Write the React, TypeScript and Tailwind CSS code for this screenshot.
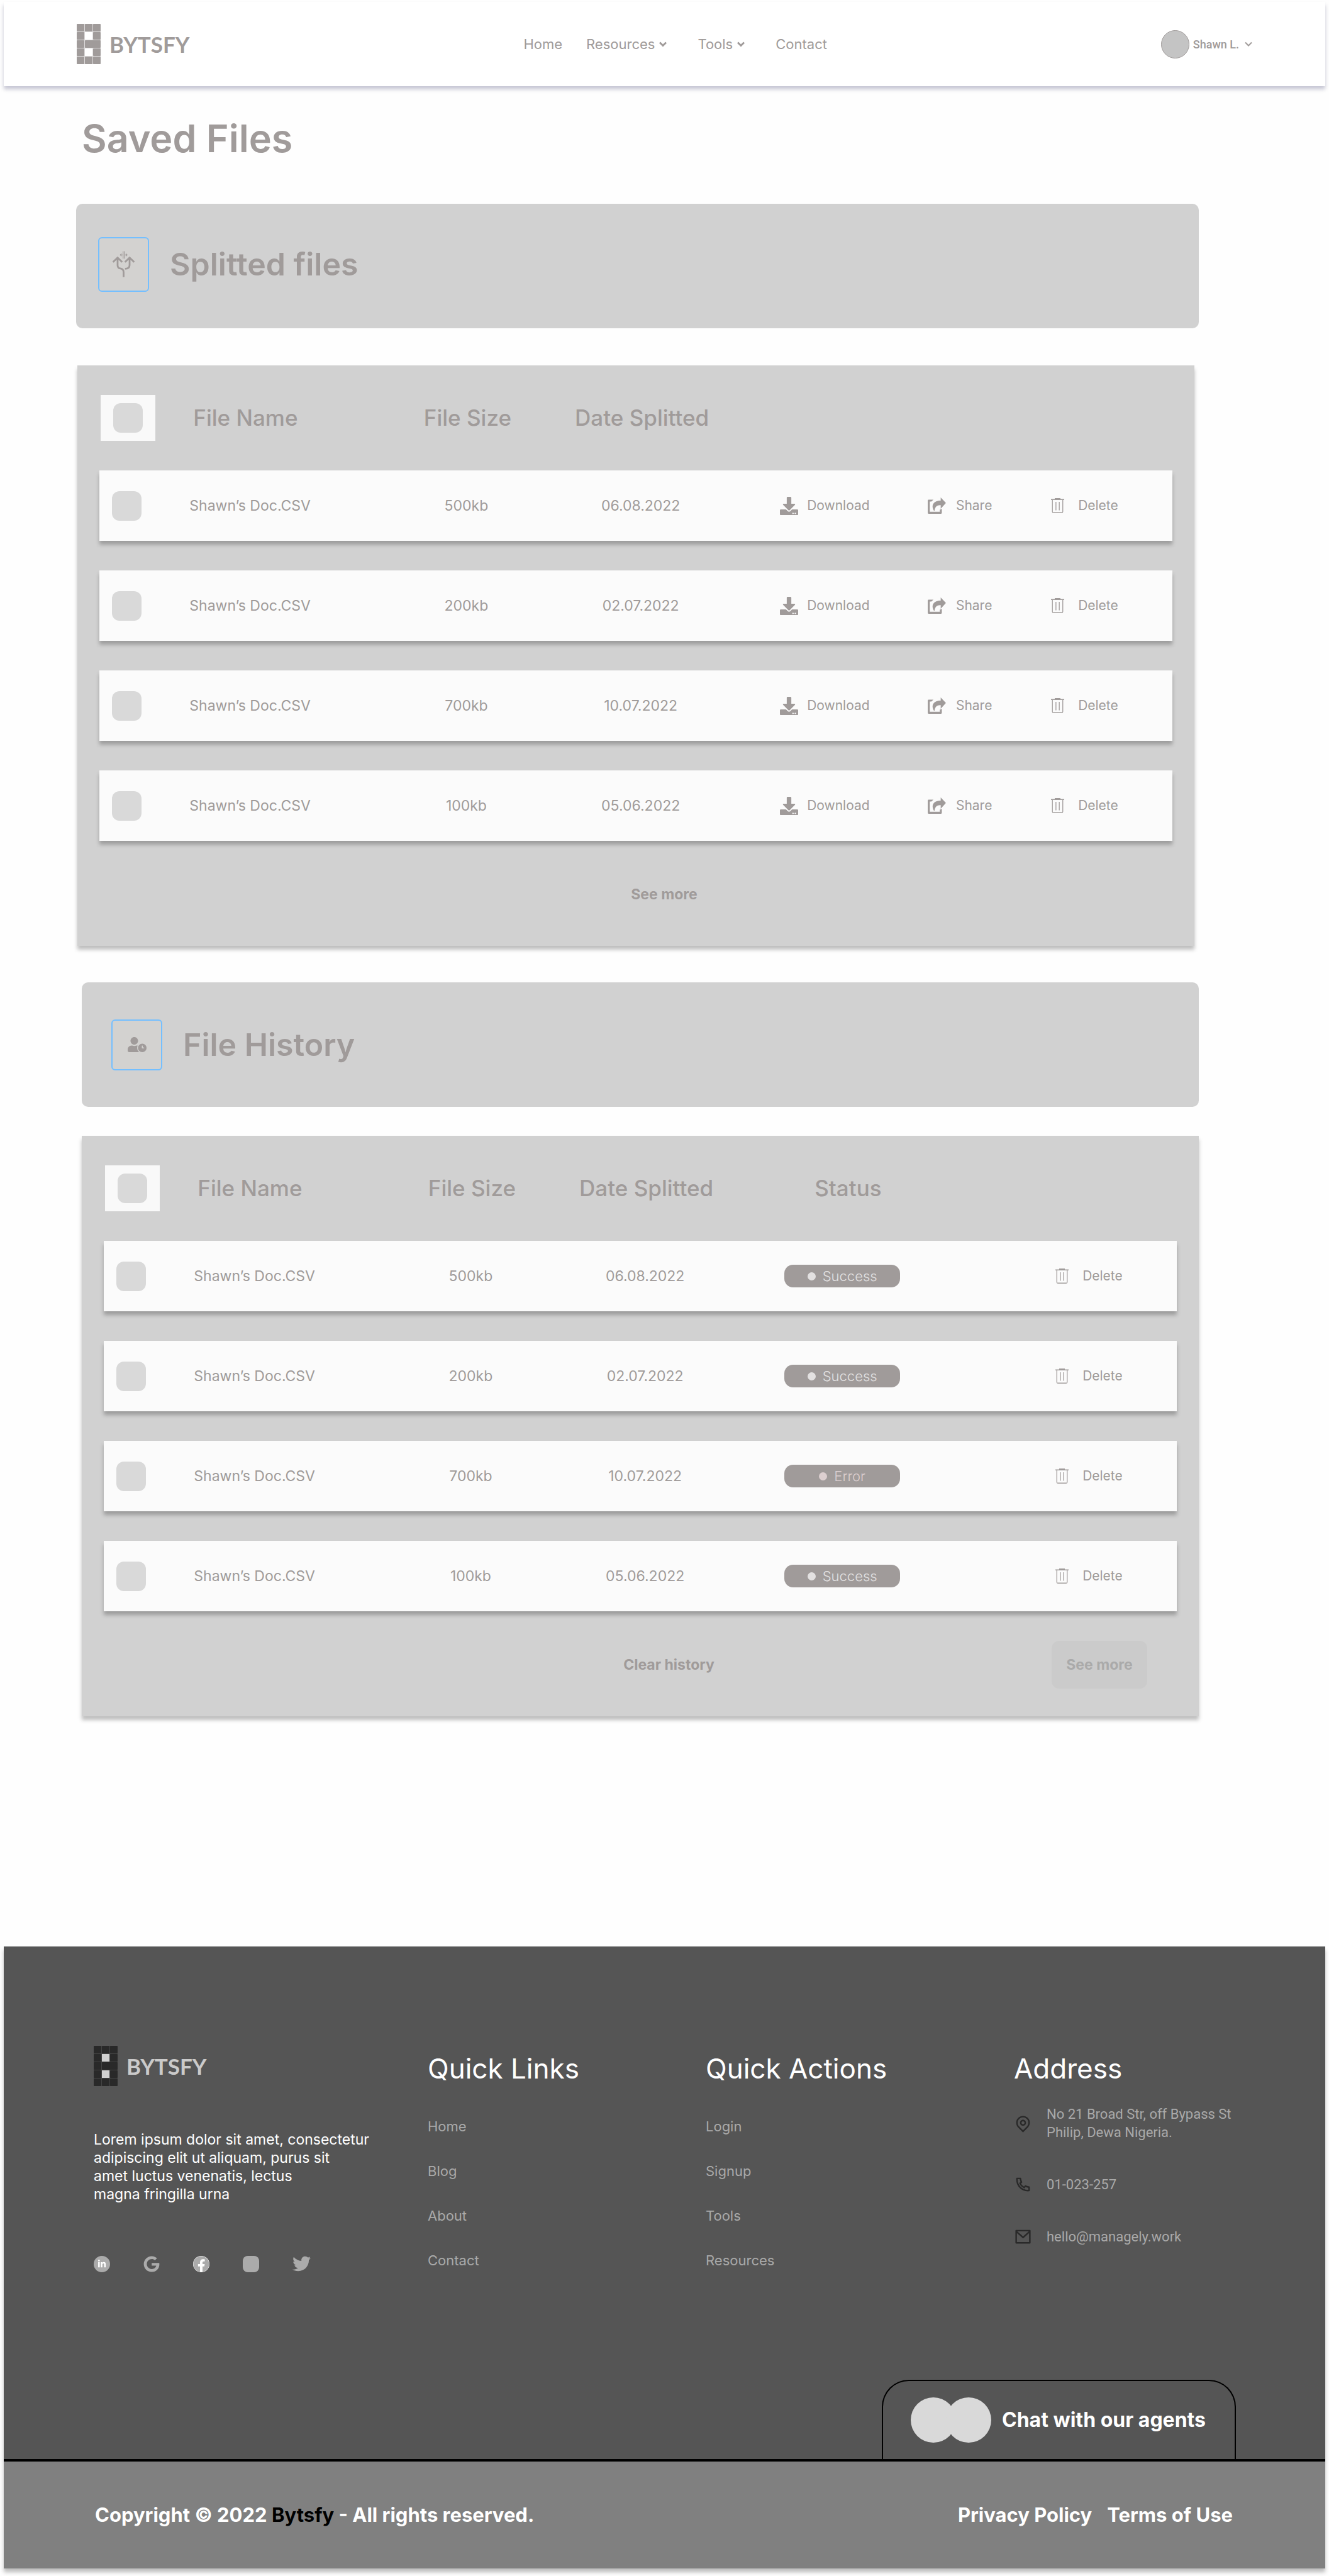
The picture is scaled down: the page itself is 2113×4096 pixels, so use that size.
import React from "react";
import { FaDownload, FaFacebook, FaGoogle, FaLinkedinIn, FaTwitter, FaUserClock } from "react-icons/fa";
import { RiMailLine, RiMapPinLine, RiPhoneLine } from "react-icons/ri";

type FileRow = {
  name: string;
  size: string;
  date: string;
  status: "Success" | "Error";
};

const files: FileRow[] = [
  { name: "Shawn’s Doc.CSV", size: "500kb", date: "06.08.2022", status: "Success" },
  { name: "Shawn’s Doc.CSV", size: "200kb", date: "02.07.2022", status: "Success" },
  { name: "Shawn’s Doc.CSV", size: "700kb", date: "10.07.2022", status: "Error" },
  { name: "Shawn’s Doc.CSV", size: "100kb", date: "05.06.2022", status: "Success" },
];

function LogoMark({ cell, hole, gap }: { cell: string; hole: string; gap: string }) {
  const cells: [number, number, number][] = [
    [0, 0, 12], [13, 0, 12], [26, 0, 12],
    [0, 13, 12], [26, 13, 12],
    [0, 26, 12], [13, 26, 25],
    [0, 39, 12], [26, 39, 12],
    [0, 52, 12], [13, 52, 12], [26, 52, 12],
  ];
  return (
    <svg viewBox="0 0 38 64" className="h-16 w-[38px] shrink-0" aria-hidden="true">
      <rect width="38" height="64" rx="2" fill={gap} />
      {cells.map(([x, y, w]) => (
        <rect key={`${x}-${y}`} x={x} y={y} width={w} height="12" rx="1" fill={cell} />
      ))}
      <rect x="13" y="13" width="12" height="12" fill={hole} />
      <rect x="13" y="39" width="12" height="12" fill={hole} />
    </svg>
  );
}

function Chevron({ thin = false }: { thin?: boolean }) {
  return (
    <svg viewBox="0 0 14 14" className="size-3.5" fill="none" stroke="currentColor" strokeWidth={thin ? 2 : 3} aria-hidden="true">
      <path d="M2 4.5l5 5 5-5" />
    </svg>
  );
}

function ShareIcon() {
  return (
    <svg viewBox="0 0 40 36" className="h-[26px] w-[29px]" fill="currentColor" aria-hidden="true">
      <path d="M12.500 5 8 9H4.500v22.500h22V27l4.500-2v9a2 2 0 0 1-2 2H2a2 2 0 0 1-2-2V7a2 2 0 0 1 2-2z" />
      <path d="M28.500 0 40 12 28.500 25v-8c-8.500-.5-12.500 3.500-13.500 12h-1.500C6.500 17 13 7 28.500 7z" />
    </svg>
  );
}

function TrashIcon() {
  return (
    <svg viewBox="0 0 28 32" className="h-6 w-[21px]" fill="none" stroke="currentColor" strokeWidth="1.7" aria-hidden="true">
      <path d="M0 3h28M8 1h12M3 3v26a2 2 0 0 0 2 2h18a2 2 0 0 0 2-2V3M10.500 8v18M17.500 8v18" />
    </svg>
  );
}

function SplitIcon() {
  return (
    <svg viewBox="40 36 50 60" className="h-11 w-[37px]" fill="none" stroke="currentColor" aria-hidden="true">
      <path strokeWidth="3.800" d="M65 94V84c0-5-2-8-7-8.500-4-.4-6-3-6-7V53M42 61.500l10-9.500 10 9.500M68 76c7 0 10-2.500 10-8V53M68 61.500 78 52l10 9.500" />
      <path strokeWidth="1.500" d="M64 38v16M66.500 38v16M62.500 46H58M60.500 43.300 57.800 46l2.700 2.700M68 46h4.500M70 43.300l2.700 2.700-2.700 2.700" />
    </svg>
  );
}

function Checkbox({ label }: { label: string }) {
  return (
    <input
      type="checkbox"
      aria-label={label}
      className="block size-[47px] appearance-none rounded-xl bg-[#d9d9d9] checked:bg-[#a09b9a]"
    />
  );
}

function Banner({ title, icon, className }: { title: string; icon: React.ReactNode; className: string }) {
  return (
    <div className={`flex h-[198px] items-center gap-[33px] rounded-[10px] bg-[#d1d1d1] ${className}`}>
      {icon}
      <h2 className="text-[50px] font-semibold">{title}</h2>
    </div>
  );
}

function Action({ icon, label, gap }: { icon: React.ReactNode; label: string; gap: string }) {
  return (
    <button type="button" className={`flex items-center text-[21px] ${gap}`}>
      {icon}
      {label}
    </button>
  );
}

function StatusPill({ status }: { status: FileRow["status"] }) {
  const tone = status === "Error" ? "text-[#dccfd0]" : "text-[#e3e1e1]";
  return (
    <div className={`flex h-9 w-[184px] items-center justify-center gap-[11px] rounded-[14px] bg-[#a09b9a] text-[22px] font-light ${tone}`}>
      <span className="size-[13px] rounded-full bg-current" />
      {status}
    </div>
  );
}

function FileTable({ history = false }: { history?: boolean }) {
  return (
    <table className="w-full table-fixed border-separate border-spacing-x-0 border-spacing-y-[47px] text-[23px]">
      <colgroup>
        <col className="w-[8.4%]" />
        <col className="w-[18.9%]" />
        <col className="w-[13.8%]" />
        <col className="w-[18.7%]" />
        <col className="w-[16.4%]" />
        <col className="w-[11.5%]" />
        <col className="w-[12.3%]" />
      </colgroup>
      <thead>
        <tr className="h-[73px] text-[35px]">
          <th className="p-0 font-medium">
            <div className="ml-0.5 flex h-[73px] w-[87px] items-center justify-center bg-[#f9f9f9]">
              <Checkbox label="Select all files" />
            </div>
          </th>
          <th className="p-0 pl-1.5 text-left font-medium">File Name</th>
          <th className="p-0 pl-1 font-medium">File Size</th>
          <th className="whitespace-nowrap p-0 pl-1 font-medium">Date Splitted</th>
          <th className="p-0 pl-[110px] text-left font-medium">{history ? "Status" : null}</th>
          <th className="p-0" />
          <th className="p-0" />
        </tr>
      </thead>
      <tbody>
        {files.map((f) => (
          <tr key={f.date} className="h-28 bg-[#fbfbfb] shadow-[0_6px_6px_rgba(0,0,0,0.25)]">
            <td className="p-0 pl-5">
              <Checkbox label={`Select ${f.name} ${f.date}`} />
            </td>
            <td className="p-0">{f.name}</td>
            <td className="p-0 text-center">{f.size}</td>
            <td className="p-0 text-center">{f.date}</td>
            <td className="p-0 pl-[62px]">
              {history ? <StatusPill status={f.status} /> : <Action icon={<FaDownload className="size-[29px]" />} label="Download" gap="gap-3.5" />}
            </td>
            <td className="p-0 pl-[17px]">
              {history ? null : <Action icon={<ShareIcon />} label="Share" gap="gap-4" />}
            </td>
            <td className="p-0 pl-[17px]">
              <Action icon={<TrashIcon />} label="Delete" gap="gap-[22px]" />
            </td>
          </tr>
        ))}
      </tbody>
    </table>
  );
}

const linkGroups = [
  { title: "Quick Links", links: ["Home", "Blog", "About", "Contact"] },
  { title: "Quick Actions", links: ["Login", "Signup", "Tools", "Resources"] },
];

export default function App() {
  return (
    <div className="min-h-screen bg-[#fefefe] pt-[3px] pb-[17px] font-['Inter',sans-serif] text-[#a09b9a]">
      <header className="mx-1.5 flex h-[134px] items-center justify-between bg-white pr-[115px] pl-[116px] shadow-[0_5px_6px_rgba(0,5,65,0.22)]">
        <a href="#home" className="flex items-center gap-3.5 font-['Lato',sans-serif] text-[35px] font-bold">
          <LogoMark cell="#a09b9a" hole="#ffffff" gap="#dddbdb" />
          BYTSFY
        </a>
        <nav className="flex items-center text-[22px]">
          <a href="#home">Home</a>
          <button type="button" className="ml-[38px] flex items-center gap-1.5">
            Resources <Chevron />
          </button>
          <button type="button" className="ml-12 flex items-center gap-1.5">
            Tools <Chevron />
          </button>
          <a href="#contact" className="ml-12">Contact</a>
        </nav>
        <button type="button" className="flex items-center font-['Roboto',sans-serif] text-[18px] font-medium">
          <span className="mr-1.5 size-[45px] rounded-full border border-[#a09b9a] bg-[#c4c4c4]" />
          <span className="mr-2">Shawn L.</span>
          <Chevron thin />
        </button>
      </header>

      <main className="mr-[207px] ml-[121px]">
        <h1 className="mt-[47px] ml-[9px] text-[61px] leading-[72px] font-semibold">Saved Files</h1>

        <Banner
          title="Splitted files"
          className="mt-[68px] pb-1.5 pl-[35px]"
          icon={
            <span className="flex h-[87px] w-[81px] items-center justify-center rounded-md border-2 border-[#74bfff] bg-[#d3d2d0]">
              <SplitIcon />
            </span>
          }
        />

        <section className="mt-[59px] mr-[7px] ml-0.5 bg-[#d1d1d1] px-[35px] pb-[62px] shadow-[0_6px_6px_rgba(0,0,0,0.25)]">
          <FileTable />
          <div className="flex h-[58px] items-center justify-center pt-[18px] pl-[90px]">
            <button type="button" className="text-[23px] font-bold">See more</button>
          </div>
        </section>

        <Banner
          title="File History"
          className="mt-[58px] ml-[9px] pl-[47px]"
          icon={
            <span className="flex size-[81px] items-center justify-center rounded-md border-2 border-[#74bfff] bg-[#d3d2d0]">
              <FaUserClock className="h-6 w-[30px]" />
            </span>
          }
        />

        <section className="mt-[46px] ml-[9px] bg-[#d1d1d1] px-[35px] pb-11 shadow-[0_6px_6px_rgba(0,0,0,0.25)]">
          <FileTable history />
          <div className="grid grid-cols-[1fr_auto_1fr] items-center pr-[47px] pl-[138px]">
            <button type="button" className="col-start-2 text-[23px] font-bold">Clear history</button>
            <button type="button" className="h-[76px] w-[152px] justify-self-end rounded-xl bg-[#cbcbcb] text-[23px] font-bold text-[#aaaaaa]">
              See more
            </button>
          </div>
        </section>
      </main>

      <footer className="mx-1.5 mt-[366px] bg-[#555555] shadow-[0_6px_6px_rgba(0,0,0,0.25)]">
        <div className="grid grid-cols-[531fr_442fr_490fr_353fr] pt-[158px] pr-[142px] pl-[143px] text-[22px] leading-[29px] text-[#a9a9a9]">
          <div>
            <a href="#home" className="flex items-center gap-3.5 font-['Lato',sans-serif] text-[35px] font-bold text-[#cacaca]">
              <LogoMark cell="#292929" hole="#d0d0d0" gap="#444444" />
              BYTSFY
            </a>
            <p className="mt-[71px] text-[23px] text-white">
              Lorem ipsum dolor sit amet, consectetur
              <br />
              adipiscing elit ut aliquam, purus sit
              <br />
              amet luctus venenatis, lectus
              <br />
              magna fringilla urna
            </p>
            <div className="mt-[81px] flex items-center gap-[53px] text-[#ababab]">
              <a href="#linkedin" aria-label="LinkedIn" className="flex size-[26px] items-center justify-center rounded-full bg-[#ababab] text-white">
                <FaLinkedinIn className="size-3.5" />
              </a>
              <a href="#google" aria-label="Google"><FaGoogle className="size-[26px]" /></a>
              <a href="#facebook" aria-label="Facebook" className="rounded-full bg-white">
                <FaFacebook className="size-[26px]" />
              </a>
              <a href="#instagram" aria-label="Instagram" className="size-[26px] rounded-lg bg-[#ababab]" />
              <a href="#twitter" aria-label="Twitter"><FaTwitter className="size-[29px]" /></a>
            </div>
          </div>

          {linkGroups.map((g) => (
            <div key={g.title}>
              <h3 className="mt-1 text-[44px] leading-[64px] text-white">{g.title}</h3>
              <ul className="mt-[46px] flex flex-col gap-[42px]">
                {g.links.map((l) => (
                  <li key={l}>
                    <a href={`#${l.toLowerCase()}`}>{l}</a>
                  </li>
                ))}
              </ul>
            </div>
          ))}

          <div>
            <h3 className="mt-1 text-[44px] leading-[64px] text-white">Address</h3>
            <address className="mt-[26px] flex flex-col gap-[54px] font-['Roboto',sans-serif] not-italic">
              <div className="flex items-center gap-[23px] whitespace-nowrap">
                <RiMapPinLine className="size-[29px] text-[#292929]" />
                <p>
                  No 21 Broad Str, off Bypass St
                  <br />
                  Philip, Dewa Nigeria.
                </p>
              </div>
              <a href="tel:01023257" className="flex items-center gap-[23px]">
                <RiPhoneLine className="size-[29px] text-[#292929]" />
                01-023-257
              </a>
              <a href="mailto:hello@managely.work" className="flex items-center gap-[23px]">
                <RiMailLine className="size-[29px] text-[#292929]" />
                hello@managely.work
              </a>
            </address>
          </div>
        </div>

        <div className="mt-[170px] flex justify-end pr-[142px]">
          <button type="button" className="flex h-[126px] items-center rounded-t-[43px] border-2 border-b-0 border-black pr-[46px] pl-11 text-[32px] font-bold text-white">
            <span className="size-[72px] rounded-full bg-[#d9d9d9]" />
            <span className="-ml-4 mr-[17px] size-[72px] rounded-full bg-[#d9d9d9]" />
            Chat with our agents
          </button>
        </div>

        <div className="flex h-[174px] items-center justify-between border-t-4 border-black bg-[#808080] pr-[147px] pl-[145px] text-[31px] font-bold text-white">
          <p>
            Copyright © 2022 <span className="text-black">Bytsfy</span> - All rights reserved.
          </p>
          <div className="flex gap-6">
            <a href="#privacy">Privacy Policy</a>
            <a href="#terms">Terms of Use</a>
          </div>
        </div>
      </footer>
    </div>
  );
}
